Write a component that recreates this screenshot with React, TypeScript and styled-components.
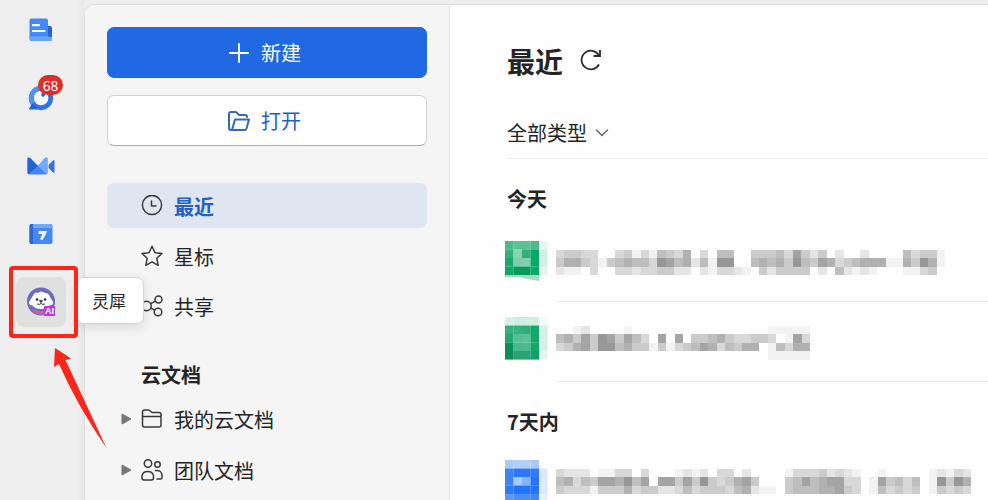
import React from "react";
import styled, { createGlobalStyle } from "styled-components";

const GlobalStyle = createGlobalStyle`
  *, *::before, *::after { box-sizing: border-box; }
  body {
    margin: 0;
    background: #eeeeee;
    color: #242424;
    font-family: "Noto Sans CJK SC", "Noto Sans", sans-serif;
    font-size: 20px;
    line-height: 28px;
  }
  button { font: inherit; color: inherit; border: 0; background: none; padding: 0; cursor: pointer; }
  ul { list-style: none; margin: 0; padding: 0; }
  h1, h2 { margin: 0; }
  svg { display: block; flex: none; }
`;

const Shell = styled.div`
  display: flex;
  height: 100vh;
  overflow: hidden;
`;

const Rail = styled.nav`
  flex: none;
  width: 84px;
  padding: 5px 0 0 16px;
  display: flex;
  flex-direction: column;
  gap: 18px;
  background: linear-gradient(to right, #eeeeee 92%, #e7e7e7);
`;

const RailItem = styled.div`
  position: relative;
  width: 50px;
  height: 50px;
`;

const RailButton = styled.button<{ $active?: boolean }>`
  width: 100%;
  height: 100%;
  display: flex;
  align-items: center;
  justify-content: center;
  border-radius: 8px;
  background: ${(p) => (p.$active ? "#e0e0e0" : "transparent")};
`;

const Badge = styled.span`
  position: absolute;
  left: 22px;
  top: 2px;
  width: 25px;
  height: 20px;
  border-radius: 10px;
  background: #d9302c;
  color: #fff;
  font-size: 14px;
  line-height: 20px;
  text-align: center;
`;

const Highlight = styled.span`
  position: absolute;
  inset: -11px -12px -11px -7px;
  border: 4px solid #fb2519;
  border-radius: 4px;
  pointer-events: none;
  z-index: 3;
`;

const Tooltip = styled.span`
  position: absolute;
  left: 61px;
  top: 0;
  z-index: 2;
  width: 67px;
  height: 47px;
  padding-left: 14px;
  border: 1px solid #d6d6d6;
  border-radius: 7px;
  background: #fff;
  box-shadow: 0 3px 12px rgba(0, 0, 0, 0.12);
  font-size: 17px;
  line-height: 46px;
  white-space: nowrap;
`;

const Pointer = styled.svg`
  position: absolute;
  left: 36px;
  top: 70px;
  z-index: 3;
  pointer-events: none;
`;

const Workspace = styled.div`
  flex: 1;
  min-width: 0;
  margin-top: 4px;
  display: flex;
  border: 1px solid #dddddd;
  border-width: 1px 0 0 1px;
  border-radius: 10px 0 0 0;
  overflow: hidden;
`;

const Sidebar = styled.aside`
  flex: none;
  width: 365px;
  padding: 22px 22px 0;
  background: #f5f5f5;
  border-right: 1px solid #e6e6e6;
`;

const Actions = styled.div`
  display: flex;
  flex-direction: column;
  gap: 17px;
`;

const ActionButton = styled.button<{ $primary?: boolean }>`
  height: 51px;
  padding-right: 5px;
  display: flex;
  align-items: center;
  justify-content: center;
  gap: 11px;
  border-radius: 7px;
  border: 1px solid ${(p) => (p.$primary ? "#2069e3" : "#d2d2d2")};
  border-bottom-color: ${(p) => (p.$primary ? "#2069e3" : "#aaaaaa")};
  background: ${(p) => (p.$primary ? "#2069e3" : "#ffffff")};
  color: ${(p) => (p.$primary ? "#ffffff" : "#245fc4")};
`;

const NavList = styled.ul`
  margin-top: 37px;
  display: flex;
  flex-direction: column;
  gap: 5px;
`;

const NavButton = styled.button<{ $active?: boolean }>`
  width: 100%;
  height: 45px;
  padding-left: 34px;
  display: flex;
  align-items: center;
  gap: 11px;
  border-radius: 7px;
  background: ${(p) => (p.$active ? "#dfe6f2" : "transparent")};

  & > span {
    color: ${(p) => (p.$active ? "#245fc4" : "inherit")};
    font-weight: ${(p) => (p.$active ? 700 : 400)};
    padding-top: 3px;
  }
`;

const SidebarHeading = styled.h2`
  margin: 33px 0 4px;
  padding-left: 34px;
  font-size: 20px;
  line-height: 28px;
`;

const TreeButton = styled.button`
  width: 100%;
  height: 51px;
  padding-left: 14px;
  display: flex;
  align-items: center;
  gap: 10px;

  & > span { padding: 3px 0 0 1px; }
`;

const Main = styled.main`
  flex: 1;
  min-width: 0;
  padding: 36px 0 0 57px;
  background: #fefefe;
`;

const TitleRow = styled.div`
  display: flex;
  align-items: center;
  gap: 16px;

  h1 { font-size: 28px; line-height: 40px; }
`;

const FilterBar = styled.div`
  margin-top: 38px;
  padding-bottom: 11px;
  border-bottom: 1px solid #efefef;
`;

const FilterButton = styled.button`
  display: flex;
  align-items: center;
  gap: 8px;
`;

const GroupHeading = styled.h2`
  padding: 26px 0 9px;
  font-size: 20px;
  line-height: 28px;
`;

const FileRow = styled.li<{ $inset: number }>`
  display: flex;
  height: 80px;

  & > div { padding-top: ${(p) => p.$inset}px; }
`;

const FileIcon = styled.div`
  flex: none;
  width: 51px;
  margin-left: -2px;
`;

const FileName = styled.div`
  flex: 1;
  min-width: 0;
  border-bottom: 1px solid #eeeeee;
`;

/* Obscured file names: each digit is the darkness of one tile. */
const NAMES = {
  first: [
    "0000000000000000000000000000000000000000000000",
    "3443300341315436030550044453742402002000053441",
    "4664314565538756251880056564854763456661164861",
    "2110300332334422021332104244440205212100011340",
  ],
  second: [
    "000000000000000000000000000000",
    "001200001000000000000000011111",
    "564748747530707044564334430173",
    "346748856441413457635466015366",
    "000000000000000000000000011111",
  ],
  third: [
    "0000000000000000000000000000000000000000000000000",
    "3222011330300012120330200001333423210010000012132",
    "5635477685707747484346740004575677330174535018486",
    "4333144463442235344435621104555667430153434014343",
  ],
};

const tone = (d: string) => {
  const v = 255 - Number(d) * 13;
  return `rgb(${v},${v},${v})`;
};

function Mosaic({ rows }: { rows: string[] }) {
  const cols = rows[0].length;
  return (
    <svg
      width={Math.round((cols * 381) / 45)}
      height={Math.round(rows.length * 8.5)}
      viewBox={`0 0 ${cols} ${rows.length}`}
      preserveAspectRatio="none"
      shapeRendering="crispEdges"
      aria-hidden="true"
    >
      {rows.map((row, y) =>
        [...row].map((d, x) =>
          d === "0" ? null : <rect key={`${x}-${y}`} x={x} y={y} width="1" height="1" fill={tone(d)} />
        )
      )}
    </svg>
  );
}

const TILES = {
  sheetA: [
    ["#4db98b", "#5bc195", "#5bc195", "#4db98b", "#e8f7f1"],
    ["#35b07d", "#8bd2b3", "#35b07d", "#0aa966", "#d3f0e4"],
    ["#16a86c", "#7fcdab", "#80cfae", "#0aa966", "#d3f0e4"],
    ["#12a568", "#089a5b", "#089a5b", "#0aa966", "#e4f5ee"],
  ],
  sheetB: [
    ["#d8f1e7", "#cfeee1", "#cfeee1", "#cfeee1", "#f3fbf8"],
    ["#36b07d", "#36b07d", "#2fae79", "#0fa96a", "#d5f1e6"],
    ["#20a870", "#55bf94", "#5ac198", "#0fa96a", "#d5f1e6"],
    ["#0a9157", "#47b98b", "#4bbb8e", "#0fa96a", "#d5f1e6"],
    ["#0c8f56", "#2ba273", "#2ba273", "#0fa365", "#e4f5ee"],
  ],
  doc: [
    ["#a9c9fb", "#b2cefb", "#b2cefb", "#a9c9fb", "#fefefe"],
    ["#3a83f8", "#2b79f7", "#2b79f7", "#2f7bf8", "#dbe8fe"],
    ["#3a83f8", "#a5c8fd", "#86b3fb", "#2474f7", "#dbe8fe"],
    ["#2f7bf4", "#2375f5", "#2375f5", "#2474f7", "#dbe8fe"],
    ["#5c97f3", "#4c8df3", "#4c8df3", "#4187f4", "#e8f0fe"],
  ],
};

function TileIcon({ tiles, tail }: { tiles: string[][]; tail?: boolean }) {
  return (
    <svg width="43" height="45" viewBox="0 0 43 45" aria-hidden="true">
      {tiles.map((row, y) =>
        row.map((fill, x) => (
          <rect key={`${x}-${y}`} x={x * 8.5} y={y * 8.5} width="8.6" height="8.6" fill={fill} />
        ))
      )}
      {tail && <path d="M0 34h34v6L22 38 14 36H0Z" fill="#a5dbc5" />}
    </svg>
  );
}

const line = {
  fill: "none",
  stroke: "#383838",
  strokeWidth: 1.5,
  strokeLinecap: "round" as const,
  strokeLinejoin: "round" as const,
  "aria-hidden": true,
};

const DocsIcon = () => (
  <svg width="24" height="24" viewBox="0 0 24 24" aria-hidden="true">
    <path d="M17 8h4a2 2 0 0 1 2 2v11a2 2 0 0 1-2 2h-4Z" fill="#2366d2" />
    <path d="M2 .5h15a2 2 0 0 1 2 2V19h4v2a2 2 0 0 1-2 2H2.500A2 2 0 0 1 .5 21V2.500a2 2 0 0 1 2-2Z" fill="#438af9" />
    <path d="M.5 18.500h18.500l4 .5v2a2 2 0 0 1-2 2H2.500a2 2 0 0 1-2-2Z" fill="#6ba5fb" />
    <path d="M4 7.200h6M4 13h11.500" stroke="#fff" strokeWidth="2.2" strokeLinecap="round" />
  </svg>
);

const ChatIcon = () => (
  <svg width="26" height="26" viewBox="0 0 24 24" aria-hidden="true">
    <circle cx="12" cy="12" r="9" fill="#fafafa" stroke="#2f74e5" strokeWidth="4.4" />
    <path d="M4.500 17A9 9 0 0 1 12 3" fill="none" stroke="#4b92fa" strokeWidth="4.4" />
    <path d="M4 18 1.500 22 8 22Z" fill="#235fc7" stroke="#235fc7" strokeLinejoin="round" />
    <circle cx="14" cy="9" r="1.8" fill="#2469dd" />
  </svg>
);

const MeetIcon = () => (
  <svg width="28" height="18" viewBox="0 0 28 18" aria-hidden="true">
    <path d="M.5 2Q.5-.5 3 1l8 8 7-8q2.500-1.500 2.500 1v13.500a2 2 0 0 1-2 2h-16a2 2 0 0 1-2-2Z" fill="#4187f7" />
    <path d="M.5 2Q.5-.5 3 1l8 8-9.500 8q-1-.5-1-2Z" fill="#2164d6" />
    <path d="m11 9 7-8q2.500-1.500 2.500 1v13q0 2-1 2Z" fill="#75a9fd" />
    <path d="M21.500 8 26 3.500q1.500-1 1.500.5v11q0 1.500-1.500.5L21.500 11Z" fill="#3473da" />
  </svg>
);

const CalendarIcon = () => (
  <svg width="24" height="22" viewBox="0 0 24 22" aria-hidden="true">
    <rect x=".5" y="1" width="23" height="20" rx="2" fill="#4387f8" />
    <path d="M4 1h17.500a2 2 0 0 1 2 2v2H4Z" fill="#72a8fd" />
    <path d="M2.500 1H4v20H2.500a2 2 0 0 1-2-2V3a2 2 0 0 1 2-2Z" fill="#2c68cd" />
    <path d="M9.500 9.500h6.500l-3.700 7.200" fill="none" stroke="#fff" strokeWidth="2.8" />
  </svg>
);

const LingxiIcon = () => (
  <svg width="30" height="30" viewBox="0 0 30 30" aria-hidden="true">
    <circle cx="15" cy="14.500" r="14" fill="#6f6ac3" />
    <path d="M6 22q9 4 18 0v3q-9 5-17 0Z" fill="#c0649c" />
    <path d="M7 8.500Q9 4.500 12 6q3-3 7 0 4 0 5 4l3 5q.5 3-3.500 3.500Q21 22 15 22t-8.500-3.500Q2.500 18 3 15Z" fill="#fff" />
    <circle cx="11" cy="12.500" r="1.2" fill="#222" />
    <circle cx="19" cy="12.500" r="1.2" fill="#222" />
    <path d="M13.300 13.500h3.400L15 15.700Z" fill="#222" stroke="#222" strokeWidth=".6" strokeLinejoin="round" />
    <path d="M11 17q2.500 1 4-.5 1.500 1.500 4 .5" fill="none" stroke="#333" />
    <rect x="18" y="19" width="11" height="10" fill="#b63be4" />
    <text x="23.500" y="27" fill="#fff" fontFamily="Liberation Sans, sans-serif" fontSize="9" fontWeight="700" textAnchor="middle">AI</text>
  </svg>
);

const PlusIcon = () => (
  <svg width="22" height="22" viewBox="0 0 22 22" {...line} stroke="#fff" strokeWidth={2}>
    <path d="M11 2v18M2 11h18" />
  </svg>
);

const OpenIcon = () => (
  <svg width="22" height="22" viewBox="0 0 22 22" {...line} stroke="#3268bd" strokeWidth={2}>
    <path d="M4 20H3a2 2 0 0 1-2-2V4a2 2 0 0 1 2-2h5l3 3h6a2 2 0 0 1 2 2" />
    <path d="M7 9.500h14l-2.500 9a2 2 0 0 1-2 1.500H4Z" />
  </svg>
);

const ClockIcon = () => (
  <svg width="22" height="22" viewBox="0 0 22 22" {...line}>
    <circle cx="11" cy="10" r="9.6" />
    <path d="M10.500 6v5H15" />
  </svg>
);

const StarIcon = () => (
  <svg width="22" height="22" viewBox="0 0 22 22" {...line}>
    <path d="m11 1.200 3 6.500 7 .8-5.200 4.800 1.400 7-6.200-3.500-6.200 3.500 1.400-7L1 8.500l7-.8Z" />
  </svg>
);

const ShareIcon = () => (
  <svg width="22" height="22" viewBox="0 0 22 22" {...line}>
    <circle cx="5.500" cy="11" r="4.700" />
    <circle cx="17.500" cy="4.500" r="3.500" />
    <circle cx="17" cy="17" r="3.800" />
    <path d="m9.700 8.700 4.800-2.500M9.700 13.200l4 2" />
  </svg>
);

const FolderIcon = () => (
  <svg width="22" height="22" viewBox="0 0 22 22" {...line}>
    <path d="M1.500 17V4a2 2 0 0 1 2-2H8l3 2.500h7a2 2 0 0 1 2 2V17a2 2 0 0 1-2 2H3.500a2 2 0 0 1-2-2ZM1.500 8.500H20" />
  </svg>
);

const TeamIcon = () => (
  <svg width="22" height="22" viewBox="0 0 22 22" {...line}>
    <circle cx="7" cy="4.500" r="3.700" />
    <circle cx="16.500" cy="5.500" r="2.700" />
    <path d="M3 21a2 2 0 0 1-2-2v-2.500a6 5.500 0 0 1 11.500 0V19a2 2 0 0 1-2 2ZM14.500 11.500q6.500-.5 6.500 5v2q0 1.500-1.500 1.500H16" />
  </svg>
);

const Caret = () => (
  <svg width="10" height="12" viewBox="0 0 10 12" aria-hidden="true">
    <path d="M1 1v10l9-5Z" fill="#777" stroke="#777" strokeLinejoin="round" />
  </svg>
);

const RefreshIcon = () => (
  <svg width="24" height="24" viewBox="0 0 24 24" {...line} stroke="#2c2c2c" strokeWidth={1.8} strokeLinecap="butt" strokeLinejoin="miter">
    <path d="M20 6.500A9.300 9.300 0 1 0 20 15.500M21 1V7H14.500" />
  </svg>
);

const ChevronIcon = () => (
  <svg width="14" height="10" viewBox="0 0 14 10" {...line} stroke="#666">
    <path d="m1.500 2 5.500 5.500L12.500 2" />
  </svg>
);

const places = [
  { label: "最近", icon: <ClockIcon />, active: true },
  { label: "星标", icon: <StarIcon /> },
  { label: "共享", icon: <ShareIcon /> },
];

export default function App() {
  return (
    <>
      <GlobalStyle />
      <Shell>
        <Rail aria-label="应用">
          <RailItem><RailButton aria-label="文档"><DocsIcon /></RailButton></RailItem>
          <RailItem>
            <RailButton aria-label="消息"><ChatIcon /></RailButton>
            <Badge>68</Badge>
          </RailItem>
          <RailItem><RailButton aria-label="会议"><MeetIcon /></RailButton></RailItem>
          <RailItem><RailButton aria-label="日历"><CalendarIcon /></RailButton></RailItem>
          <RailItem>
            <RailButton $active aria-label="灵犀"><LingxiIcon /></RailButton>
            <Tooltip role="tooltip">灵犀</Tooltip>
            <Highlight />
            <Pointer width="56" height="104" viewBox="0 0 56 104" aria-hidden="true">
              <path d="M3 1 19 11.500 13.500 13 54.500 101Q26 60 7 17L2 20Z" fill="#fb2519" />
            </Pointer>
          </RailItem>
        </Rail>
        <Workspace>
          <Sidebar>
            <Actions>
              <ActionButton $primary><PlusIcon />新建</ActionButton>
              <ActionButton><OpenIcon />打开</ActionButton>
            </Actions>
            <NavList>
              {places.map((p) => (
                <li key={p.label}>
                  <NavButton $active={p.active}>{p.icon}<span>{p.label}</span></NavButton>
                </li>
              ))}
            </NavList>
            <SidebarHeading>云文档</SidebarHeading>
            <ul>
              <li><TreeButton><Caret /><FolderIcon /><span>我的云文档</span></TreeButton></li>
              <li><TreeButton><Caret /><TeamIcon /><span>团队文档</span></TreeButton></li>
            </ul>
          </Sidebar>
          <Main>
            <TitleRow>
              <h1>最近</h1>
              <button aria-label="刷新"><RefreshIcon /></button>
            </TitleRow>
            <FilterBar>
              <FilterButton>全部类型<ChevronIcon /></FilterButton>
            </FilterBar>
            <GroupHeading>今天</GroupHeading>
            <ul>
              <FileRow $inset={19}>
                <FileIcon><TileIcon tiles={TILES.sheetA} tail /></FileIcon>
                <FileName><Mosaic rows={NAMES.first} /></FileName>
              </FileRow>
              <FileRow $inset={15}>
                <FileIcon><TileIcon tiles={TILES.sheetB} /></FileIcon>
                <FileName><Mosaic rows={NAMES.second} /></FileName>
              </FileRow>
            </ul>
            <GroupHeading>7天内</GroupHeading>
            <ul>
              <FileRow $inset={15}>
                <FileIcon><TileIcon tiles={TILES.doc} /></FileIcon>
                <FileName><Mosaic rows={NAMES.third} /></FileName>
              </FileRow>
            </ul>
          </Main>
        </Workspace>
      </Shell>
    </>
  );
}
